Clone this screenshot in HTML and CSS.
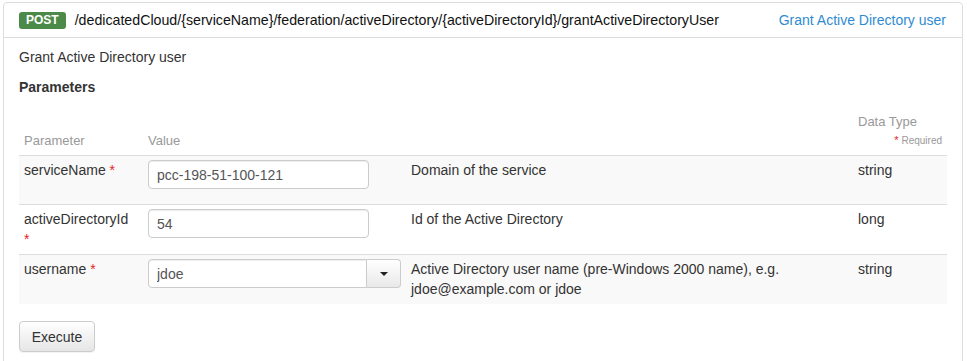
FILE: index.html
```html
<!DOCTYPE html>
<html>
<head>
    <meta charset="utf-8" />
    <title>grantActiveDirectoryUser</title>
    <link rel="stylesheet" href="styles.css">
</head>
<body>
    <div class="operation">
        <div class="operation-heading">
            <span class="method">POST</span>
            <span class="path">/dedicatedCloud/{serviceName}/federation/activeDirectory/{activeDirectoryId}/grantActiveDirectoryUser</span>
            <a class="summary" href="#">Grant Active Directory user</a>
        </div>
        <div class="operation-body">
            <p class="description">Grant Active Directory user</p>
            <h4>Parameters</h4>
            <table class="params">
                <thead>
                    <tr>
                        <th class="col-name">Parameter</th>
                        <th class="col-value">Value</th>
                        <th class="col-desc"></th>
                        <th class="col-type">
                            <div>Data Type</div>
                            <div class="required-note"><span class="star">*</span> Required</div>
                        </th>
                    </tr>
                </thead>
                <tbody>
                    <tr>
                        <td class="name">serviceName <span class="star">*</span></td>
                        <td><input class="form-control" type="text" value="pcc-198-51-100-121"></td>
                        <td>Domain of the service</td>
                        <td>string</td>
                    </tr>
                    <tr>
                        <td class="name">activeDirectoryId <span class="star">*</span></td>
                        <td><input class="form-control" type="text" value="54"></td>
                        <td>Id of the Active Directory</td>
                        <td>long</td>
                    </tr>
                    <tr>
                        <td class="name">username <span class="star">*</span></td>
                        <td>
                            <div class="combo">
                                <input class="form-control" type="text" value="jdoe">
                                <button class="combo-toggle" type="button"><span class="caret"></span></button>
                            </div>
                        </td>
                        <td>Active Directory user name (pre-Windows 2000 name), e.g. jdoe@example.com or jdoe</td>
                        <td>string</td>
                    </tr>
                </tbody>
            </table>
            <button class="btn-execute" type="button">Execute</button>
        </div>
    </div>
</body>
</html>
```

FILE: styles.css
```css
body {
    font-family: "Liberation Sans", Arial, sans-serif;
    font-size: 14px;
    line-height: 20px;
    color: #333;
    margin: 2px 4px 0 3px;
    background: white;
}

.operation {
    border: 1px solid #ddd;
    border-radius: 4px;
    padding-bottom: 40px;
}

.operation-heading {
    display: flex;
    align-items: center;
    height: 34px;
    padding: 0 16px 0 15px;
    border-bottom: 1px solid #ddd;
}

.method {
    background-color: #4b8a48;
    color: white;
    font-weight: bold;
    font-size: 12px;
    line-height: 17px;
    padding: 0 7px;
    border-radius: 3px;
    margin-right: 9px;
}

.path {
    flex: 1;
    font-size: 14.2px;
    color: #111;
}

.summary {
    color: #2f8bd1;
    text-decoration: none;
}

.operation-body {
    padding: 9px 15px 0 15px;
}

.description {
    margin: 0 0 10px 0;
}

h4 {
    margin: 0 0 10px 0;
    font-size: 14px;
    font-weight: bold;
}

table.params {
    width: 100%;
    border-collapse: collapse;
}

.params th,
.params td {
    padding: 4px 5px 5px 5px;
    text-align: left;
    vertical-align: top;
}

.params th {
    padding: 5px 5px 4px 5px;
    vertical-align: bottom;
    font-weight: normal;
    font-size: 13px;
    color: #999;
    border-bottom: 1px solid #ddd;
}

.params th.col-type {
    padding-bottom: 6px;
}

.params td {
    border-top: 1px solid #ddd;
}

.params td.name {
    padding-right: 14px;
}

.params tbody tr:nth-child(odd) td {
    background-color: #f9f9f9;
}

.col-name { width: 114px; }
.col-value { width: 253px; }
.col-type { width: 84px; }

.required-note {
    font-size: 10px;
    line-height: 17px;
    text-align: right;
    color: #999;
}

.star {
    color: #e8211c;
    font-size: 14px;
}

.required-note .star {
    font-size: 11px;
}

.form-control {
    box-sizing: border-box;
    width: 221px;
    height: 29px;
    margin-bottom: 10px;
    padding: 0 8px;
    font-family: inherit;
    font-size: 14px;
    color: #555;
    border: 1px solid #ccc;
    border-radius: 4px;
    background: white;
    box-shadow: inset 0 1px 1px rgba(0, 0, 0, 0.075);
}

.combo {
    display: flex;
    width: 253px;
    margin-bottom: 10px;
}

.combo .form-control {
    flex: 1;
    margin: 0;
    border-radius: 4px 0 0 4px;
}

.combo-toggle {
    width: 34px;
    height: 29px;
    border: 1px solid #ccc;
    border-left: none;
    border-radius: 0 4px 4px 0;
    background: linear-gradient(#fff, #e9e9e9);
    display: flex;
    align-items: center;
    justify-content: center;
    padding: 0;
}

.caret {
    border-top: 4px solid #222;
    border-left: 4px solid transparent;
    border-right: 4px solid transparent;
}

.btn-execute {
    margin-top: 17px;
    width: 76px;
    height: 31px;
    font-family: inherit;
    font-size: 14px;
    color: #333;
    border: 1px solid #ccc;
    border-radius: 4px;
    background: linear-gradient(#fff, #e6e6e6);
    box-shadow: 0 1px 1px rgba(0, 0, 0, 0.05);
}
```
